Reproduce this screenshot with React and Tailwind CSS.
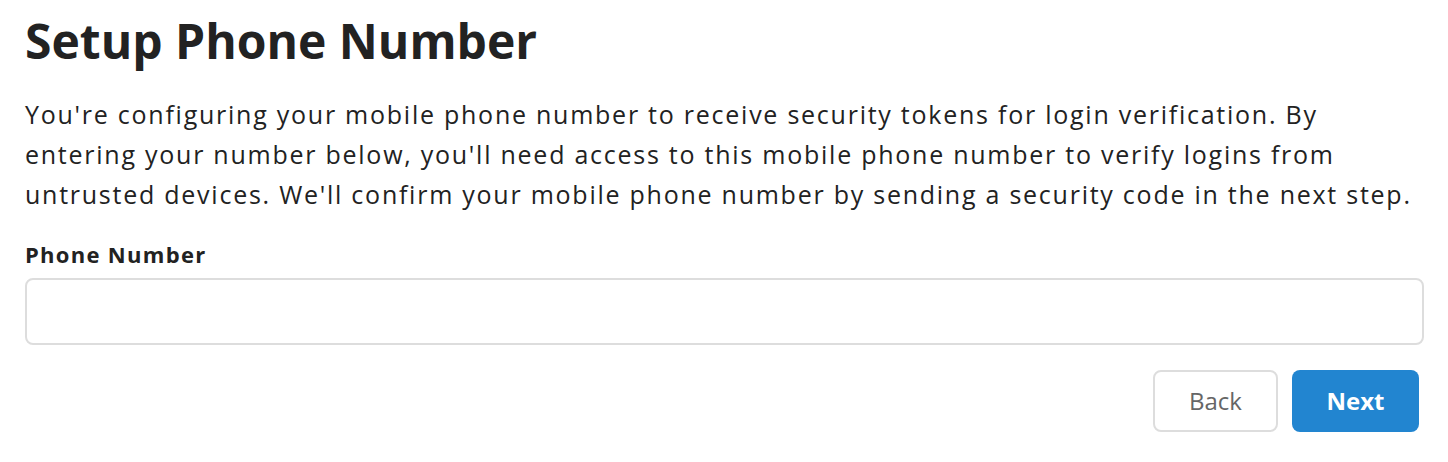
export default function App() {
  return (
    <div className="min-h-screen bg-white font-['Open_Sans',sans-serif] text-[#222]">
      <div className="px-[25px] pt-[13px]">
        <h1 className="text-[48px] font-bold leading-[56px]">Setup Phone Number</h1>
        <p className="mt-[25px] w-[1400px] text-[25px] leading-[40px] tracking-[1.75px]">
          You're configuring your mobile phone number to receive security tokens for login verification. By entering your
          number below, you'll need access to this mobile phone number to verify logins from untrusted devices. We'll
          confirm your mobile phone number by sending a security code in the next step.
        </p>
        <label className="mt-[25px] block text-[22px] font-bold leading-[30px] tracking-[1.3px]">Phone Number</label>
        <input
          type="text"
          className="mt-[9px] block h-[67px] w-[1399px] rounded-lg border-2 border-[#ddd] px-4 text-[24px] outline-none"
        />
        <div className="mt-[25px] flex w-[1394px] justify-end gap-[14px]">
          <button className="h-[62px] w-[125px] rounded-lg border-2 border-[#ddd] bg-white text-[24px] text-[#666]">
            Back
          </button>
          <button className="h-[62px] w-[127px] rounded-lg bg-[#2285d0] text-[24px] font-bold text-white">Next</button>
        </div>
      </div>
    </div>
  );
}
